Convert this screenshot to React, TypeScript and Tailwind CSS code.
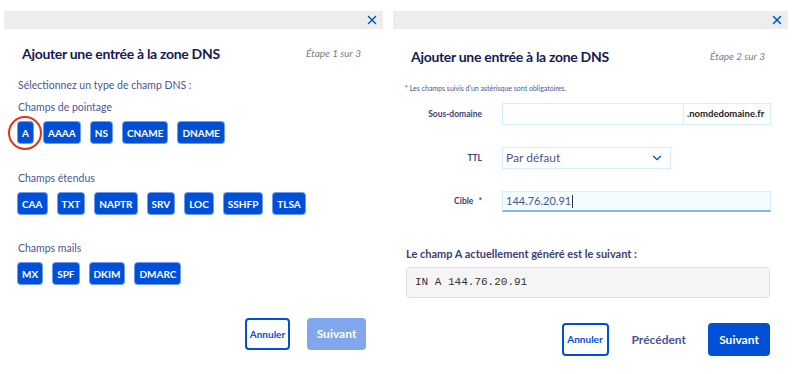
import { ChevronDown, X } from 'lucide-react';

const FONT = { fontFamily: 'Lato, "Open Sans", sans-serif' };

function TypeButton({ label }: { label: string }) {
  return (
    <button
      type="button"
      className="block h-[21px] rounded-[3px] bg-[#0050d7] px-[4px] text-[10px] font-bold leading-none text-white ring-1 ring-[#6f9cf0]"
    >
      {label}
    </button>
  );
}

function Group({ title, items, first }: { title: string; items: string[]; first?: boolean }) {
  return (
    <div className="pl-[14px]">
      <div className="h-[16px] text-[10.5px] leading-[16px] text-[#4d5591]">{title}</div>
      <div className="mt-[7px] flex items-center gap-[11px]">
        {items.map((it, i) => (
          <div key={it} className="relative flex">
            <TypeButton label={it} />
            {first && i === 0 && (
              <div className="pointer-events-none absolute left-1/2 top-1/2 h-[34px] w-[34px] -translate-x-1/2 -translate-y-1/2 rounded-full border-2 border-[#e4321b]" />
            )}
          </div>
        ))}
      </div>
    </div>
  );
}

function TopBar() {
  return (
    <div className="mt-[11px] flex h-[18px] items-center justify-end bg-[#ededeb] pr-[4px]">
      <X size={14} strokeWidth={2.5} className="text-[#0050d7]" />
    </div>
  );
}

function StepOne() {
  return (
    <div className="w-[379px]">
      <TopBar />
      <div className="mt-[14px] flex h-[20px] items-center justify-between pl-[18px] pr-[22px]">
        <h2 className="text-[14px] font-bold tracking-[-0.3px] text-[#141a55]">Ajouter une entrée à la zone DNS</h2>
        <span className="text-[10px] italic text-[#7a7d8c]">Étape 1 sur 3</span>
      </div>
      <div className="mt-[14px] h-[16px] pl-[14px] text-[10.5px] leading-[16px] text-[#4d5591]">
        Sélectionnez un type de champ DNS :
      </div>
      <div className="mt-[6px]">
        <Group title="Champs de pointage" items={['A', 'AAAA', 'NS', 'CNAME', 'DNAME']} first />
      </div>
      <div className="mt-[27px]">
        <Group title="Champs étendus" items={['CAA', 'TXT', 'NAPTR', 'SRV', 'LOC', 'SSHFP', 'TLSA']} />
      </div>
      <div className="mt-[26px]">
        <Group title="Champs mails" items={['MX', 'SPF', 'DKIM', 'DMARC']} />
      </div>
      <div className="mt-[34px] flex justify-end gap-[17px] pr-[17px]">
        <button
          type="button"
          className="h-[32px] w-[45px] rounded-[4px] border-2 border-[#0050d7] text-[10px] font-bold text-[#0050d7]"
        >
          Annuler
        </button>
        <button
          type="button"
          className="h-[32px] w-[59px] rounded-[4px] bg-[#80a7ec] text-[12px] font-bold text-white"
        >
          Suivant
        </button>
      </div>
    </div>
  );
}

function Row({ label, star, children }: { label: string; star?: boolean; children: React.ReactNode }) {
  return (
    <div className="flex items-center pl-[12px]">
      <div className="w-[77px] text-right text-[8.5px] font-bold text-[#3b4178]">
        {label}
        {star && <span className="ml-[5px]">*</span>}
      </div>
      <div className="ml-[20px]">{children}</div>
    </div>
  );
}

function StepTwo() {
  return (
    <div className="w-[395px]">
      <TopBar />
      <div className="mt-[17px] flex h-[20px] items-center justify-between pl-[18px] pr-[23px]">
        <h2 className="text-[14px] font-bold tracking-[-0.3px] text-[#141a55]">Ajouter une entrée à la zone DNS</h2>
        <span className="text-[10px] italic text-[#7a7d8c]">Étape 2 sur 3</span>
      </div>
      <div className="mt-[16px] h-[12px] pl-[12px] text-[7px] leading-[12px] text-[#4d5591]">
        <span className="text-[#e4321b]">*</span> Les champs suivis d'un astérisque sont obligatoires.
      </div>
      <div className="mt-[9px]">
        <Row label="Sous-domaine">
          <div className="flex h-[22px] w-[269px] border border-[#d3f0fa]">
            <div className="flex-1" />
            <div className="flex w-[87px] items-center border-l border-[#d3f0fa] px-[3px] text-[9.5px] font-bold text-[#222]">
              .nomdedomaine.fr
            </div>
          </div>
        </Row>
      </div>
      <div className="mt-[22px]">
        <Row label="TTL">
          <div className="flex h-[22px] w-[169px] items-center justify-between border border-[#d3f0fa] pl-[3px] pr-[6px] text-[12px] text-[#4d5591]">
            Par défaut
            <ChevronDown size={14} strokeWidth={2} className="text-[#0050d7]" />
          </div>
        </Row>
      </div>
      <div className="mt-[22px]">
        <Row label="Cible" star>
          <div className="flex h-[21px] w-[269px] items-center border border-b-2 border-[#d3f0fa] border-b-[#8bb0f0] bg-[#f3fcff] pl-[3px] text-[11px] text-[#4d5591]">
            144.76.20.91<span className="ml-px h-[13px] w-px bg-[#333]" />
          </div>
        </Row>
      </div>
      <div className="mt-[34px] h-[16px] pl-[13px] text-[11px] font-bold leading-[16px] text-[#3b4178]">
        Le champ A actuellement généré est le suivant :
      </div>
      <div className="ml-[13px] mt-[5px] flex h-[31px] w-[364px] items-center rounded-[4px] border border-[#dedede] bg-[#f5f5f5] pl-[8px] font-['Liberation_Mono',monospace] text-[11px] text-[#333]">
        IN A 144.76.20.91
      </div>
      <div className="mt-[25px] flex items-center justify-end pr-[18px]">
        <button
          type="button"
          className="h-[33px] w-[47px] rounded-[4px] border-2 border-[#0050d7] text-[10px] font-bold text-[#0050d7]"
        >
          Annuler
        </button>
        <button type="button" className="ml-[23px] text-[12px] font-bold text-[#4d5591]">
          Précédent
        </button>
        <button
          type="button"
          className="ml-[22px] h-[33px] w-[62px] rounded-[4px] bg-[#0050d7] text-[12px] font-bold text-white"
        >
          Suivant
        </button>
      </div>
    </div>
  );
}

export default function App() {
  return (
    <div style={FONT} className="flex h-[374px] w-[794px] gap-[10px] overflow-hidden bg-white pl-[4px]">
      <StepOne />
      <StepTwo />
    </div>
  );
}
